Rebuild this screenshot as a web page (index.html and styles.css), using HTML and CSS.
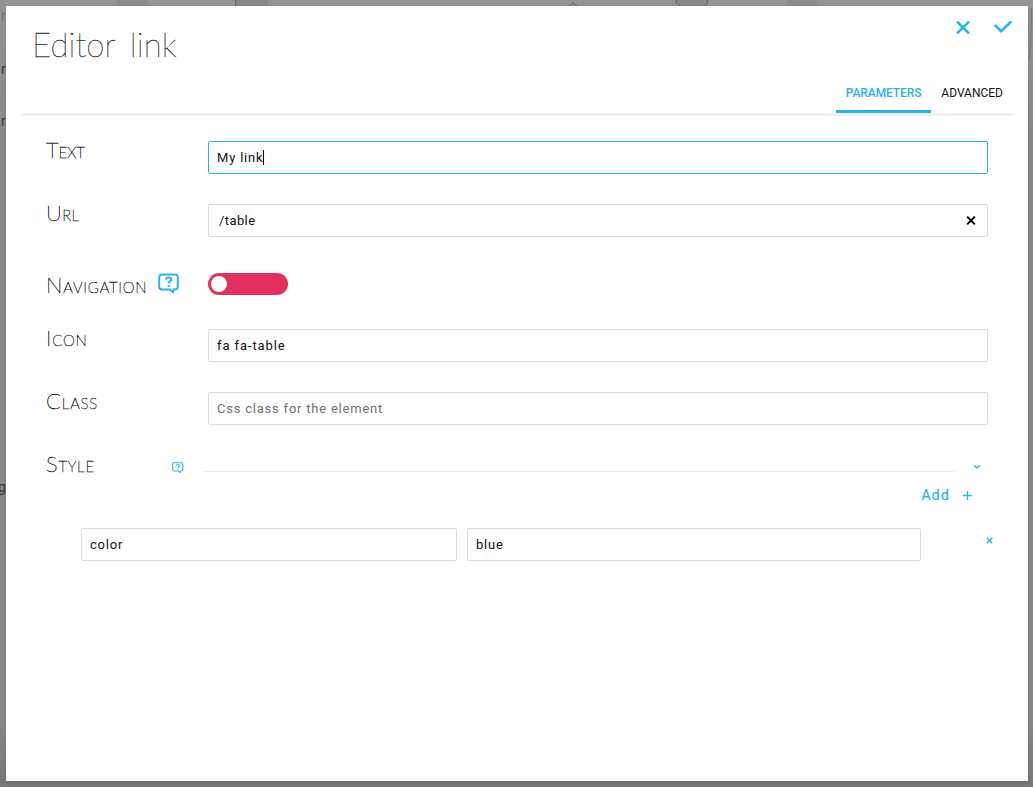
FILE: index.html
```html
<!DOCTYPE html>
<html lang="en">
<head>
<meta charset="utf-8">
<title>Editor link</title>
<link rel="stylesheet" href="styles.css">
</head>
<body>
<div class="page-behind">
  <svg class="backdrop-art" width="1033" height="787" viewBox="0 0 1033 787" aria-hidden="true">
    <path d="M117 0h31v6h-31zM787 0h30v6h-30z" fill="#8d8d8d"/>
    <path d="M235 0h33v6h-33zM676 0h32v4l-3 2h-23l-6-4z" fill="#87888a"/>
    <path d="M235.5 0v6M676 0v3l5 3M707.500 0v3l-3 3M569 6l4-3 4 3" fill="none" stroke="#626365"/>
    <path d="M1031.500 8v14l-2 38" fill="none" stroke="#777879"/>
  </svg>
  <span class="ghost g1">r</span><span class="ghost g2">r</span><span class="ghost g3">r</span><span class="ghost g4">g</span>
</div>
<main class="modal">
  <header class="head">
    <h1 class="title">Editor link</h1>
    <div class="actions">
      <svg width="14" height="14" viewBox="0 0 14 14"><path d="M1.800 1.300l10.400 10.400M12.200 1.300L1.800 11.700"/></svg>
      <svg width="18" height="14" viewBox="0 0 18 14"><path d="M1.500 4.600L7 10.200L16.500 1.300"/></svg>
    </div>
  </header>
  <nav class="tabs"><a class="tab active">PARAMETERS</a><a class="tab">ADVANCED</a></nav>
  <section class="form">
    <div class="row"><label class="label l-text">Text</label><div class="field focused">My link<i class="caret"></i></div></div>
    <div class="row"><label class="label l-url">Url</label><div class="field url"><span>/table</span>
      <svg width="10" height="10" viewBox="0 0 10 10"><path d="M1.200.7l7.600 7.600M8.800.7L1.200 8.300"/></svg></div></div>
    <div class="row nav-row"><label class="label l-nav">Navigation</label>
      <svg class="help" width="22" height="22" viewBox="0 0 22 22"><path d="M4 1.500h13q2.800 0 2.800 2.800v9.400q0 2.800-2.800 2.800h-1.500l-.5 2.700L11.800 16.500H4q-2.800 0-2.800-2.800V4.300q0-2.800 2.800-2.800z"/><path d="M8 6.500q.3-2 2.700-2t2.600 2q0 1.200-1.600 2.100-1.100.7-1.100 2M10.600 12v2"/></svg>
      <div class="toggle"><i></i></div></div>
    <div class="row"><label class="label l-icon">Icon</label><div class="field icon-field">fa fa-table</div></div>
    <div class="row"><label class="label l-class">Class</label><div class="field placeholder">Css class for the element</div></div>
    <div class="style-row"><label class="label l-style">Style</label>
      <svg class="help small" width="12" height="12" viewBox="0 0 22 22"><path d="M4 1.500h13q2.800 0 2.800 2.800v9.400q0 2.800-2.800 2.800h-1.500l-.5 2.700L11.800 16.500H4q-2.800 0-2.800-2.800V4.300q0-2.800 2.800-2.800z"/><path d="M8 6.500q.3-2 2.700-2t2.600 2q0 1.200-1.600 2.100-1.100.7-1.100 2M10.600 12v2"/></svg>
      <div class="rule"></div>
      <svg class="chevron" width="8" height="6" viewBox="0 0 8 6"><path d="M1 1.200l3 2.800 3-2.800"/></svg></div>
    <div class="add"><span>Add</span><svg width="9" height="9" viewBox="0 0 9 9"><path d="M0 4.500h9M4.500 0v9"/></svg></div>
    <div class="pair"><div class="field key">color</div><div class="field value">blue</div>
      <svg width="7" height="7" viewBox="0 0 7 7"><path d="M.7.7l5.600 5.600M6.300.7L.7 6.300"/></svg></div>
  </section>
</main>
</body>
</html>
```
FILE: styles.css
```css
* { box-sizing: border-box; }
body { margin: 0; padding: 6px 5px 6px 6px; width: 1033px; height: 787px; overflow: hidden; background: #949494; font-family: Roboto, sans-serif; }
svg { display: block; flex: none; }
.page-behind { position: absolute; inset: 0; background: linear-gradient(#949494 0 6px, #88898b 150px, #88898b 720px, #78797b 781px); }
.backdrop-art { width: 1033px; height: 787px; }
.ghost { position: absolute; left: 1px; color: #38393b; font: 14px/16px Roboto, sans-serif; }
.g1 { top: 8px; color: #747577; }
.g2 { top: 61px; }
.g3 { top: 113px; }
.g4 { top: 479px; left: -2px; }
.modal { position: relative; width: 1022px; height: 775px; background: #fff; box-shadow: 0 2px 5px rgba(0,0,0,.12); }
.head { display: flex; justify-content: space-between; height: 71px; padding: 14px 16px 0 26px; }
.title { margin: 0; font: 100 33px/48px Lato, sans-serif; letter-spacing: .1px; word-spacing: 5px; color: #111; -webkit-text-stroke: .3px #222; white-space: nowrap; }
.actions { display: flex; gap: 24px; height: 14px; padding-top: 1px; }
.actions svg, .help, .chevron, .add svg, .pair svg { fill: none; stroke: #2bb3e8; }
.actions svg { stroke-width: 2.6; stroke-linecap: round; }
.tabs { display: flex; justify-content: flex-end; height: 39px; margin: 0 15px; border-bottom: 3px solid #efefef; }
.tab { height: 36px; padding: 0 10px; border-bottom: 3px solid transparent; font-size: 12px; line-height: 32px; color: #111; }
.active { color: #2bb3e8; border-color: #2bb3e8; font-weight: 500; width: 95px; padding-left: 9.5px; letter-spacing: -.1px; }
.form { padding: 25px 40px 0; }
.row { display: flex; justify-content: space-between; height: 33px; margin-bottom: 30px; }
.label { font: 100 22px/18px Lato, sans-serif; font-variant: small-caps; color: #000; white-space: nowrap; -webkit-text-stroke: .4px #000; }
.l-nav { letter-spacing: .8px; }
.l-icon, .l-class, .l-style { letter-spacing: .8px; }
.l-url { letter-spacing: .4px; }
.field { display: flex; align-items: center; width: 780px; height: 33px; padding: 0 8px; border: 1px solid #dbdbdb; border-radius: 2px; font-size: 13px; letter-spacing: .8px; color: #111; }
.focused { border-color: #2bb3e8; }
.caret { width: 1px; height: 15px; background: #000; }
.url { justify-content: space-between; padding: 0 11px 0 10px; letter-spacing: .4px; }
.url svg { fill: none; stroke: #000; stroke-width: 1.9; }
.icon-field { letter-spacing: .9px; }
.nav-row { height: 22px; margin: 36px 0 34px; justify-content: flex-start; }
.nav-row .label { width: 112px; padding-top: 3px; }
.toggle { width: 80px; height: 22px; padding: 3px; margin-left: 28px; border-radius: 11px; background: #e3305e; }
.toggle i { display: block; width: 16px; height: 16px; border-radius: 50%; background: #fff; }
.help { stroke-width: 2; }
.placeholder { color: #707070; letter-spacing: .78px; }
.style-row { display: flex; height: 32px; }
.style-row .label { width: 125px; }
.small { margin: 7px 0 0 1px; }
.rule { width: 751px; height: 1px; margin: 16px 19px 0 19px; background: #ededed; }
.chevron { margin-top: 9px; stroke-width: 1.3; }
.add { display: flex; align-items: center; justify-content: flex-end; gap: 13px; height: 16px; padding-right: 16px; font-size: 14px; font-weight: 400; letter-spacing: 1.2px; color: #2bb3e8; -webkit-text-stroke: .2px #2bb3e8; }
.add svg { stroke-width: 1.3; }
.pair { display: flex; gap: 10px; margin: 25px -5px 0 35px; }
.key { width: 376px; }
.value { width: 454px; }
.pair svg { margin: 9px 0 0 55px; stroke-width: 1.4; }
```
